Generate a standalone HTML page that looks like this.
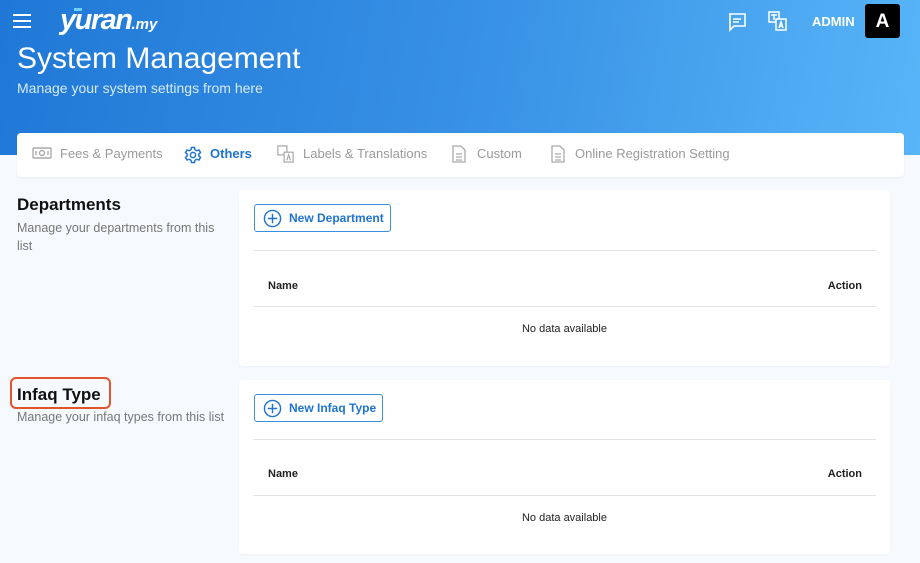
<!DOCTYPE html>
<html><head><meta charset="utf-8"><style>
*{margin:0;padding:0;box-sizing:border-box}
body{width:920px;height:563px;overflow:hidden;background:#f6f9fd;font-family:"Liberation Sans",Roboto,sans-serif;position:relative}
.hdr{position:absolute;left:0;top:0;width:920px;height:155px;background:linear-gradient(100deg,#1f78d6 0%,#3a93e6 55%,#58b5f8 100%)}
.abs{position:absolute}
.tabs{position:absolute;left:17px;top:133px;width:887px;height:44px;background:#fff;border-radius:4px;box-shadow:0 1px 2px rgba(0,0,0,.05)}
.tab{position:absolute;top:0;height:44px;line-height:42px;font-size:13px;color:#9a9a9a}
.tab svg{position:absolute;top:12px}
.card{position:absolute;left:239px;width:651px;background:#fff;border-radius:4px;box-shadow:0 1px 2px rgba(0,0,0,.04)}
.btn{position:absolute;left:15px;top:14px;height:28px;border:1px solid #3b8ee0;border-radius:3px;color:#1f74d0;font-size:12px;font-weight:bold;line-height:26px;padding-left:34px;padding-right:6px}
.btn svg{position:absolute;left:8px;top:4px}
.line{position:absolute;left:14px;right:14px;height:1px;background:#e3e3e3}
.th{position:absolute;font-size:11px;font-weight:bold;color:#222}
.nd{position:absolute;left:0;right:0;text-align:center;font-size:11px;color:#222}
h2{position:absolute;font-size:17px;font-weight:bold;color:#111}
.sub{position:absolute;font-size:12.5px;color:#777;line-height:18px}
</style></head><body>
<div class="hdr"></div>
<div class="abs" style="left:13px;top:14px"><div style="width:18px;height:2px;background:#fff;margin-bottom:4px"></div><div style="width:18px;height:2px;background:#fff;margin-bottom:4px"></div><div style="width:18px;height:2px;background:#fff"></div></div>
<div class="abs" style="left:60px;top:4px;color:#fff;font-size:29px;font-weight:bold;font-style:italic;letter-spacing:-1.5px">yuran<span style="font-size:15px;letter-spacing:0">.my</span></div>
<div class="abs" style="left:74px;top:8px;width:8px;height:3px;background:#6fd0ff"></div>
<div class="abs" style="left:17px;top:42px;color:#fff;font-size:30px">System Management</div>
<div class="abs" style="left:17px;top:80px;color:#d6eafc;font-size:14px">Manage your system settings from here</div>
<svg class="abs" style="left:727px;top:12px" width="20" height="20" viewBox="0 0 20 20" fill="none" stroke="#fff" stroke-width="1.6"><path d="M2 2h16v12H7l-4 4V2z"/><path d="M6 7h8M6 10h6"/></svg>
<svg class="abs" style="left:768px;top:11px" width="19" height="20" viewBox="0 0 19 20" fill="none" stroke="#fff" stroke-width="1.5"><rect x="1" y="1" width="10" height="10"/><rect x="8" y="8" width="10" height="11" fill="#4aa4ee"/><path d="M11 17l2-6 2 6M12 15h2M3 4h6M6 3v6"/></svg>
<div class="abs" style="left:812px;top:14px;color:#fff;font-size:13px;font-weight:bold">ADMIN</div>
<div class="abs" style="left:865px;top:4px;width:35px;height:34px;background:#000;border-radius:3px;color:#fff;font-size:19px;font-weight:bold;text-align:center;line-height:35px">A</div>
<div class="tabs">
<div class="tab" style="left:15px"><svg style="left:0" width="20" height="16" viewBox="0 0 20 16" fill="none" stroke="#aaa" stroke-width="1.4"><rect x="1" y="3" width="18" height="10" rx="1"/><circle cx="10" cy="8" r="2.5"/><path d="M4 6v4M16 6v4"/></svg><span style="margin-left:28px">Fees &amp; Payments</span></div>
<div class="tab" style="left:167px;color:#1f74d0;font-weight:bold"><svg style="left:0;top:13px" width="18" height="18" viewBox="0 0 24 24" fill="none" stroke="#1f74d0" stroke-width="2"><circle cx="12" cy="12" r="3.5"/><path d="M10 2h4l.7 3 2.4 1.3 2.9-1 2 3.4-2.2 2.1v2.4l2.2 2.1-2 3.4-2.9-1-2.4 1.3L14 22h-4l-.7-3-2.4-1.3-2.9 1-2-3.4 2.2-2.1v-2.4L2 8.7l2-3.4 2.9 1L9.3 5z"/></svg><span style="margin-left:26px">Others</span></div>
<div class="tab" style="left:260px"><svg style="left:0" width="17" height="18" viewBox="0 0 19 20" fill="none" stroke="#aaa" stroke-width="1.4"><rect x="1" y="1" width="10" height="10"/><rect x="8" y="8" width="10" height="11" fill="#fff"/><path d="M11 17l2-6 2 6"/></svg><span style="margin-left:26px">Labels &amp; Translations</span></div>
<div class="tab" style="left:435px"><svg style="left:0" width="14" height="18" viewBox="0 0 14 18" fill="none" stroke="#aaa" stroke-width="1.3"><path d="M1 1h8l4 4v12H1z"/><path d="M4 9h6M4 12h6M4 15h6"/></svg><span style="margin-left:25px">Custom</span></div>
<div class="tab" style="left:534px"><svg style="left:0" width="14" height="18" viewBox="0 0 14 18" fill="none" stroke="#aaa" stroke-width="1.3"><path d="M1 1h8l4 4v12H1z"/><path d="M4 9h6M4 12h6M4 15h6"/></svg><span style="margin-left:24px">Online Registration Setting</span></div>
</div>
<h2 style="left:17px;top:195px">Departments</h2>
<div class="sub" style="left:17px;top:219px;width:210px">Manage your departments from this list</div>
<div class="card" style="top:190px;height:176px">
<div class="btn"><svg width="19" height="19" viewBox="0 0 20 20" fill="none" stroke="#1f74d0" stroke-width="1.5"><circle cx="10" cy="10" r="8.5"/><path d="M10 5v10M5 10h10"/></svg>New Department</div>
<div class="line" style="top:60px"></div>
<div class="th" style="left:29px;top:90px">Name</div><div class="th" style="right:28px;top:90px">Action</div>
<div class="line" style="top:116px"></div>
<div class="nd" style="top:133px">No data available</div>
</div>
<div class="abs" style="left:10px;top:377px;width:101px;height:32px;border:2px solid #e4542c;border-radius:6px"></div>
<h2 style="left:17px;top:385px">Infaq Type</h2>
<div class="sub" style="left:17px;top:408px">Manage your infaq types from this list</div>
<div class="card" style="top:380px;height:174px">
<div class="btn"><svg width="19" height="19" viewBox="0 0 20 20" fill="none" stroke="#1f74d0" stroke-width="1.5"><circle cx="10" cy="10" r="8.5"/><path d="M10 5v10M5 10h10"/></svg>New Infaq Type</div>
<div class="line" style="top:59px"></div>
<div class="th" style="left:29px;top:88px">Name</div><div class="th" style="right:28px;top:88px">Action</div>
<div class="line" style="top:115px"></div>
<div class="nd" style="top:132px">No data available</div>
</div>
</body></html>
